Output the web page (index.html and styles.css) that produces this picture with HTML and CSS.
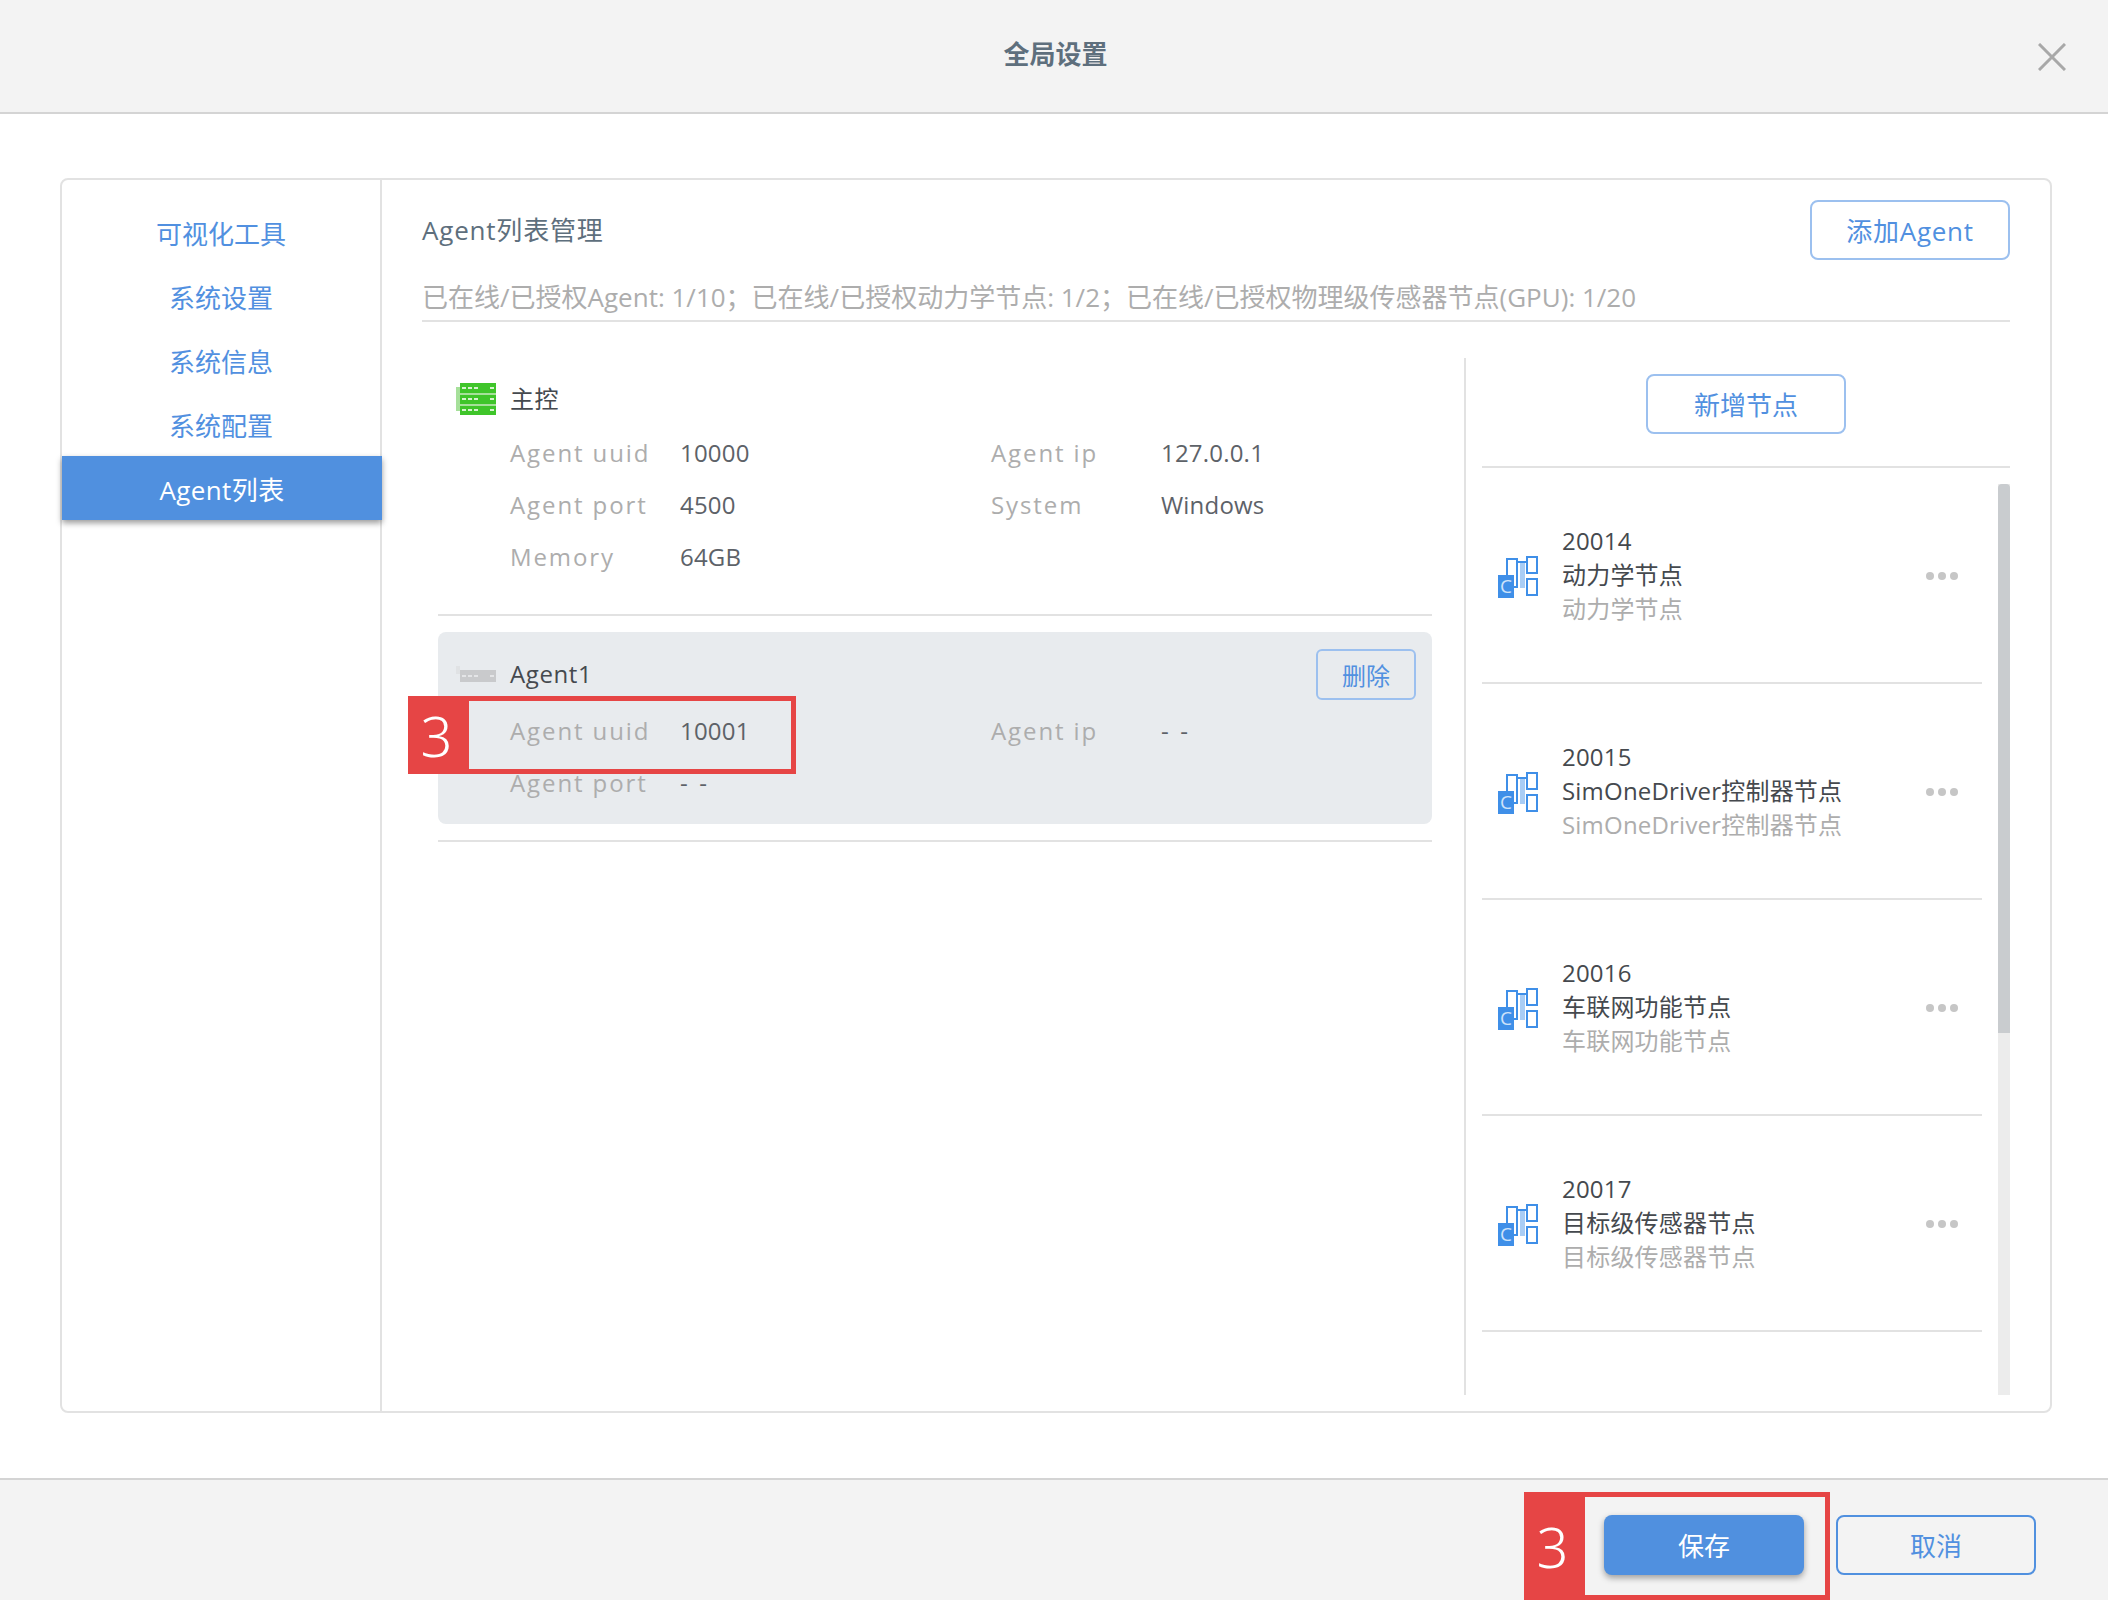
FILE: index.html
```html
<!DOCTYPE html>
<html lang="zh-CN">
<head>
<meta charset="utf-8">
<title>全局设置</title>
<link rel="stylesheet" href="styles.css">
</head>
<body>
<svg class="defs" width="0" height="0" aria-hidden="true">
  <symbol id="node" viewBox="0 0 40 42">
    <rect x="9" y="3" width="10" height="28" fill="#fff" stroke="#3f8fe8" stroke-width="2"/>
    <path d="M19 6h9" fill="none" stroke="#3f8fe8" stroke-width="2"/>
    <rect x="22" y="7" width="5" height="25" fill="#a9cdf5"/>
    <rect x="29" y="1" width="10" height="16" fill="#fff" stroke="#3f8fe8" stroke-width="2"/>
    <rect x="29" y="23" width="10" height="16" fill="#fff" stroke="#3f8fe8" stroke-width="2"/>
    <rect x="0" y="19" width="16" height="23" fill="#3f8fe8"/>
    <text class="node-c" x="8" y="37" text-anchor="middle">C</text>
  </symbol>
</svg>
<div class="page">
  <header class="top">
    <div></div>
    <h1 class="top-title">全局设置</h1>
    <svg class="close" viewBox="0 0 28 28" width="28" height="28"><path d="M1 1l26 26M27 1L1 27" stroke="#a8a8a8" stroke-width="3" fill="none"/></svg>
  </header>

  <main class="main">
    <div class="card">
      <nav class="nav">
        <a class="nav-item">可视化工具</a>
        <a class="nav-item">系统设置</a>
        <a class="nav-item">系统信息</a>
        <a class="nav-item">系统配置</a>
        <a class="nav-item nav-active">Agent列表</a>
      </nav>
      <section class="content">
        <div class="head-row">
          <h2 class="head-title">Agent列表管理</h2>
          <button class="btn btn-light btn-add">添加Agent</button>
        </div>
        <p class="stats">已在线/已授权Agent: 1/10；已在线/已授权动力学节点: 1/2；已在线/已授权物理级传感器节点(GPU): 1/20</p>
        <div class="body">
          <div class="agents">
            <div class="agent agent-master">
              <div class="agent-title">
                <svg class="srv" viewBox="0 0 40 32" width="40" height="32">
                  <rect x="0" y="4" width="4" height="24" fill="#a6e09a"/>
                  <rect x="4" y="10" width="36" height="2" fill="#a6e09a"/>
                  <rect x="4" y="21" width="36" height="2" fill="#a6e09a"/>
                  <rect x="4" y="0" width="36" height="10" fill="#3fc52a"/>
                  <rect x="4" y="12" width="36" height="9" fill="#3fc52a"/>
                  <rect x="4" y="23" width="36" height="9" fill="#3fc52a"/>
                  <path d="M6 5h16M6 16h16M6 27h16M34 5h4M34 16h4M34 27h4" stroke="#d6f3cf" stroke-width="2" stroke-dasharray="4 2"/>
                </svg>
                <span class="agent-name">主控</span>
              </div>
              <div class="kv">
                <span class="k">Agent uuid</span><span class="v">10000</span><span class="k">Agent ip</span><span class="v">127.0.0.1</span>
                <span class="k">Agent port</span><span class="v">4500</span><span class="k">System</span><span class="v">Windows</span>
                <span class="k">Memory</span><span class="v">64GB</span>
              </div>
            </div>
            <div class="agent-off">
              <div class="agent-title">
                <svg class="srv" viewBox="0 0 40 16" width="40" height="16">
                  <rect x="0" y="0" width="4" height="8" fill="#e0e2e4"/>
                  <rect x="4" y="4" width="36" height="12" fill="#c9cacc"/>
                  <path d="M6 10h16M34 10h4" stroke="#e4e5e7" stroke-width="2" stroke-dasharray="4 2"/>
                </svg>
                <span class="agent-name">Agent1</span>
                <button class="btn btn-light btn-del">删除</button>
              </div>
              <div class="kv">
                <span class="k">Agent uuid</span><span class="v">10001</span><span class="k">Agent ip</span><span class="v">- -</span>
                <span class="k">Agent port</span><span class="v">- -</span>
              </div>
            </div>
            <div class="agents-end"></div>
          </div>

          <aside class="nodes">
            <div class="nodes-bar"><button class="btn btn-light btn-new">新增节点</button></div>
            <div class="nodes-scroll">
              <div class="node-list">
                <div class="node">
                  <svg class="node-icon" width="40" height="42"><use href="#node"/></svg>
                  <div class="node-text"><div class="node-line">20014</div><div class="node-line">动力学节点</div><div class="node-line node-sub">动力学节点</div></div>
                  <div class="dots"><i></i><i></i><i></i></div>
                </div>
                <div class="node">
                  <svg class="node-icon" width="40" height="42"><use href="#node"/></svg>
                  <div class="node-text"><div class="node-line">20015</div><div class="node-line">SimOneDriver控制器节点</div><div class="node-line node-sub">SimOneDriver控制器节点</div></div>
                  <div class="dots"><i></i><i></i><i></i></div>
                </div>
                <div class="node">
                  <svg class="node-icon" width="40" height="42"><use href="#node"/></svg>
                  <div class="node-text"><div class="node-line">20016</div><div class="node-line">车联网功能节点</div><div class="node-line node-sub">车联网功能节点</div></div>
                  <div class="dots"><i></i><i></i><i></i></div>
                </div>
                <div class="node">
                  <svg class="node-icon" width="40" height="42"><use href="#node"/></svg>
                  <div class="node-text"><div class="node-line">20017</div><div class="node-line">目标级传感器节点</div><div class="node-line node-sub">目标级传感器节点</div></div>
                  <div class="dots"><i></i><i></i><i></i></div>
                </div>
              </div>
              <div class="track"><div class="thumb"></div></div>
            </div>
          </aside>
        </div>
      </section>
    </div>
  </main>

  <footer class="bottom">
    <button class="btn btn-save">保存</button>
    <button class="btn btn-cancel">取消</button>
  </footer>

  <div class="mark mark-uuid"><span class="mark-num">3</span></div>
  <div class="mark mark-save"><span class="mark-num">3</span></div>
</div>
</body>
</html>
```

FILE: styles.css
```css
* { box-sizing: border-box; }
html, body { margin: 0; padding: 0; }
body {
  font-family: "Open Sans", "Noto Sans CJK SC", sans-serif;
  font-size: 24px;
  color: #45494e;
  background: #fff;
}
.defs { display: none; }
.page {
  position: relative;
  width: 2108px;
  height: 1600px;
  overflow: hidden;
  display: flex;
  flex-direction: column;
}

/* top bar */
.top {
  flex: none;
  height: 114px;
  background: #f3f3f3;
  border-bottom: 2px solid #d4d4d4;
  display: grid;
  grid-template-columns: 1fr auto 1fr;
  align-items: center;
}
.top-title {
  margin: 0 0 6px 3px;
  font-size: 26px;
  font-weight: 600;
  color: #5e6f7d;
}
.close { justify-self: end; margin: 2px 42px 0 0; }

/* main card */
.main {
  flex: 1;
  min-height: 0;
  padding: 64px 56px 65px 60px;
  display: flex;
}
.card {
  flex: 1;
  display: flex;
  border: 2px solid #e2e2e2;
  border-radius: 8px;
}
.nav {
  flex: none;
  width: 320px;
  padding-top: 20px;
  border-right: 2px solid #e2e2e2;
  display: flex;
  flex-direction: column;
}
.nav-item {
  height: 64px;
  padding-top: 1px;
  display: flex;
  align-items: center;
  justify-content: center;
  font-size: 26px;
  color: #5190e0;
}
.nav-active {
  margin-right: -2px;
  background: #5090df;
  color: #fff;
  letter-spacing: .4px;
  box-shadow: 0 3px 6px rgba(0, 0, 0, .4);
  position: relative;
}

/* content */
.content {
  flex: 1;
  min-width: 0;
  padding: 20px 40px 16px 40px;
  display: flex;
  flex-direction: column;
}
.head-row {
  display: flex;
  justify-content: space-between;
  align-items: flex-start;
  height: 59px;
}
.head-title {
  margin: 12px 0 0;
  font-size: 26px;
  line-height: 36px;
  font-weight: 400;
  letter-spacing: .8px;
  color: #5e6f7d;
}
.stats {
  margin: 0;
  height: 63px;
  padding-top: 19px;
  line-height: 38px;
  font-size: 26px;
  color: #adadad;
  border-bottom: 2px solid #e2e2e2;
  white-space: nowrap;
}
.body {
  flex: 1;
  min-height: 0;
  margin-top: 36px;
  display: flex;
}

/* buttons */
.btn {
  display: flex;
  align-items: center;
  justify-content: center;
  padding: 0;
  font: inherit;
  border-radius: 8px;
  background: transparent;
}
.btn-light { border: 2px solid #9cc0ef; color: #5190e0; font-size: 26px; }
.btn-add { width: 200px; height: 60px; letter-spacing: .7px; }
.btn-new { width: 200px; height: 60px; }
.btn-del {
  width: 100px;
  height: 51px;
  margin-left: auto;
  font-size: 24px;
  border-radius: 6px;
}
.btn-save {
  width: 200px;
  height: 60px;
  border: none;
  background: #5090df;
  color: #fff;
  font-size: 26px;
  box-shadow: 0 3px 6px rgba(0, 0, 0, .35);
}
.btn-cancel {
  width: 200px;
  height: 60px;
  border: 2px solid #5090df;
  color: #5190e0;
  font-size: 26px;
}

/* agents */
.agents {
  flex: none;
  width: 994px;
  margin-left: 16px;
}
.agent-master {
  height: 258px;
  padding: 16px 16px 0 18px;
  border-bottom: 2px solid #e2e2e2;
}
.agent-off {
  height: 192px;
  margin-top: 16px;
  padding: 17px 16px 0 18px;
  background: #e8ebee;
  border-radius: 8px;
}
.agent-title {
  height: 50px;
  display: flex;
  align-items: center;
  gap: 14px;
}
.agent-name { line-height: 36px; letter-spacing: .6px; color: #45494e; }
.agent-master .kv { margin-top: 2px; }
.agent-off .kv { margin-top: 5px; }
.kv {
  margin-left: 54px;
  display: grid;
  grid-template-columns: 170px 311px 170px 1fr;
  grid-auto-rows: 52px;
  align-items: center;
}
.k { color: #adadad; letter-spacing: 1.9px; }
.v { color: #5d6268; letter-spacing: .2px; word-spacing: 5px; }
.agents-end {
  margin-top: 16px;
  border-top: 2px solid #e2e2e2;
}

/* nodes */
.nodes {
  flex: none;
  width: 546px;
  margin-left: 32px;
  padding-left: 16px;
  border-left: 2px solid #e2e2e2;
  display: flex;
  flex-direction: column;
}
.nodes-bar {
  flex: none;
  height: 110px;
  padding-top: 16px;
  display: flex;
  justify-content: center;
  align-items: flex-start;
  border-bottom: 2px solid #e2e2e2;
}
.nodes-scroll {
  flex: 1;
  min-height: 0;
  display: flex;
  gap: 16px;
}
.node-list { flex: none; width: 500px; }
.node {
  height: 216px;
  padding: 0 24px 0 16px;
  display: flex;
  align-items: center;
  gap: 24px;
  border-bottom: 2px solid #e2e2e2;
}
.node-icon { flex: none; margin-top: 4px; }
.node-c {
  font-family: "Open Sans", sans-serif;
  font-size: 19px;
  fill: #cfe3fa;
}
.node-text { flex: 1; min-width: 0; }
.node-line { line-height: 34px; white-space: nowrap; letter-spacing: .2px; color: #45494e; }
.node-sub { color: #adadad; }
.dots { flex: none; display: flex; gap: 4px; margin-top: 1px; }
.dots i {
  width: 8px;
  height: 8px;
  border-radius: 50%;
  background: #c6c6c6;
}
.track {
  flex: none;
  width: 12px;
  margin-top: 16px;
  background: #ececec;
}
.thumb {
  height: 549px;
  background: #c9cccf;
  border-radius: 4px 4px 0 0;
}

/* footer */
.bottom {
  flex: none;
  height: 122px;
  padding: 35px 72px 0 0;
  background: #f3f3f3;
  border-top: 2px solid #d4d4d4;
  display: flex;
  justify-content: flex-end;
  gap: 32px;
}

/* annotation overlays */
.mark {
  position: absolute;
  border: 5px solid #e64545;
  display: flex;
}
.mark-uuid { left: 408px; top: 696px; width: 388px; height: 78px; }
.mark-save { left: 1524px; top: 1492px; width: 306px; height: 108px; }
.mark-num {
  flex: none;
  width: 61px;
  margin: -5px 0 -5px -5px;
  padding-right: 4px;
  display: flex;
  align-items: center;
  justify-content: center;
  background: #e64545;
  color: #fff;
  font-family: "Noto Sans", sans-serif;
  font-size: 56px;
  font-weight: 300;
}
```
